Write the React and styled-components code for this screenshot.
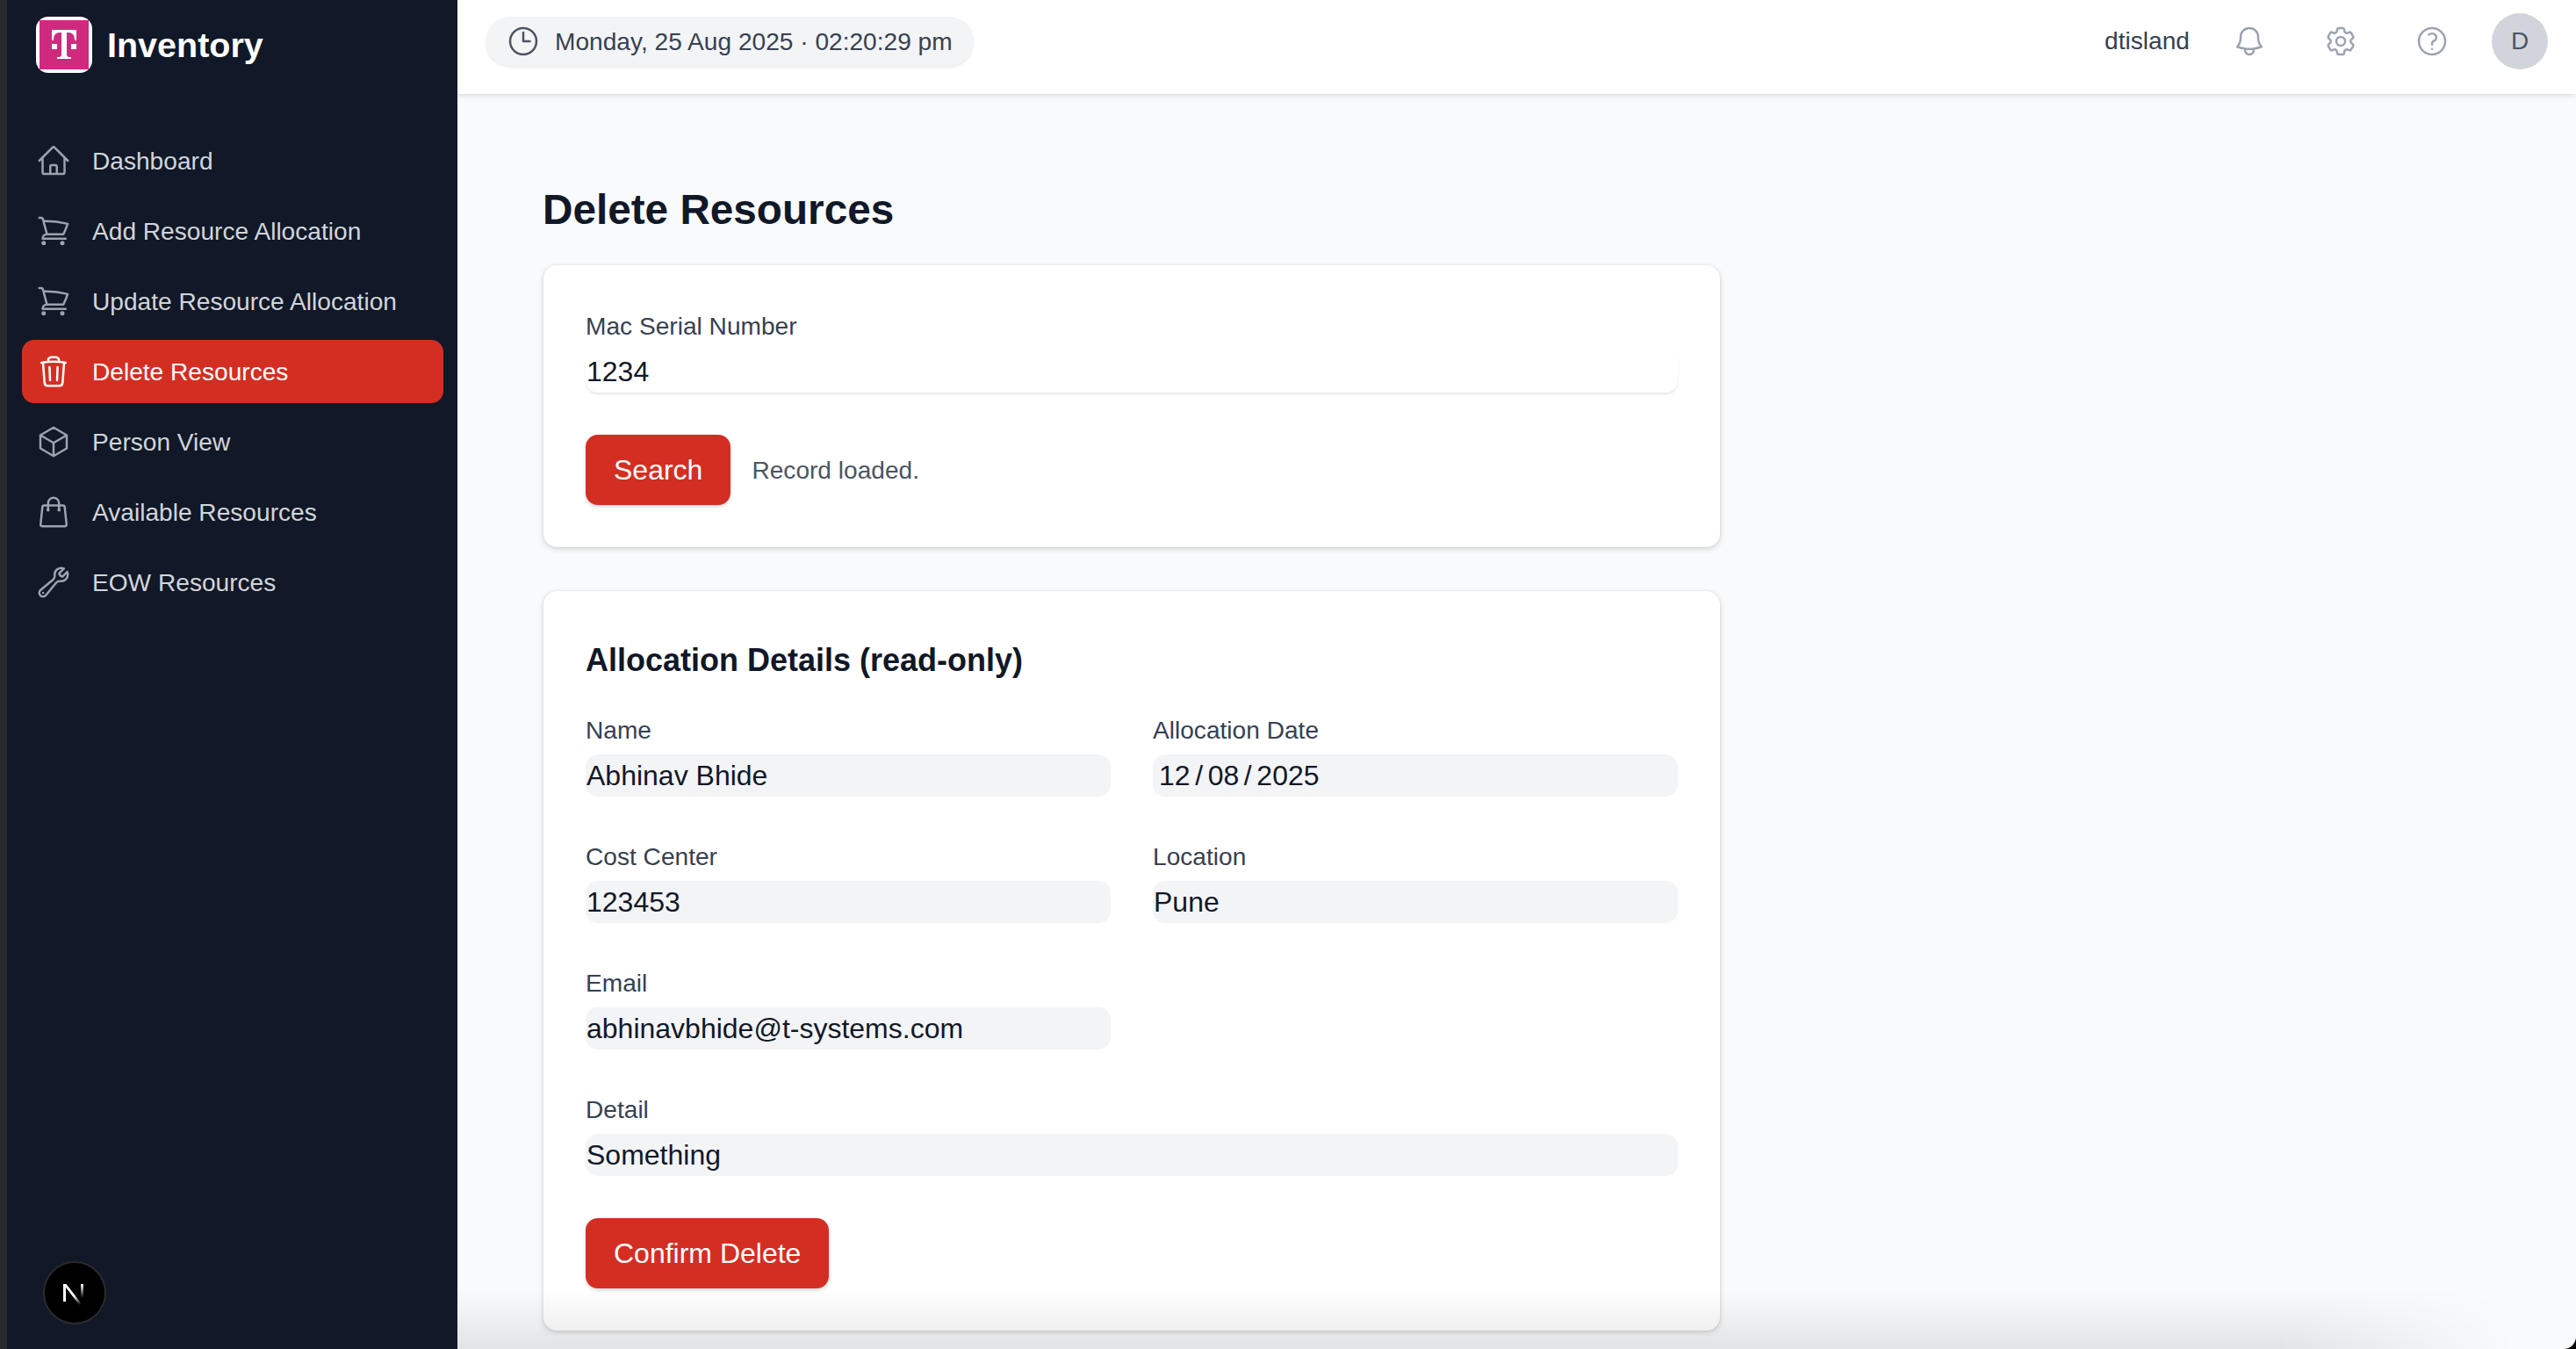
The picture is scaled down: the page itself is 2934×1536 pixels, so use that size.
import React from "react";
import styled, { createGlobalStyle } from "styled-components";
import {
  HiOutlineHome,
  HiOutlineShoppingCart,
  HiOutlineTrash,
  HiOutlineCube,
  HiOutlineShoppingBag,
  HiOutlineWrench,
  HiOutlineClock,
  HiOutlineBell,
  HiOutlineCog6Tooth,
  HiOutlineQuestionMarkCircle,
} from "react-icons/hi2";

const GlobalStyle = createGlobalStyle`
  html, body {
    margin: 0;
    padding: 0;
    height: 100%;
    overflow: hidden;
    background: #000;
    font-family: "Liberation Sans", Arial, sans-serif;
  }
  * { box-sizing: border-box; }
`;

const Shell = styled.div`
  display: flex;
  height: 1536px;
  border-left: 8px solid #2a2a2e;
`;

const Sidebar = styled.aside`
  position: relative;
  flex: 0 0 513px;
  background: #111827;
  padding: 19px 16px 0 17px;
`;

const Brand = styled.div`
  display: flex;
  align-items: center;
  gap: 17px;
  padding-left: 16px;
  height: 64px;
  margin-bottom: 64px;
`;

const LogoBox = styled.div`
  width: 64px;
  height: 64px;
  border-radius: 14px;
  background: #fff;
  padding: 4px;
`;

const LogoInner = styled.div`
  width: 56px;
  height: 56px;
  background: #d02a7f;
  display: flex;
  align-items: center;
  justify-content: center;
`;

const BrandName = styled.span`
  color: #fff;
  font-size: 39.5px;
  font-weight: 700;
`;

const Nav = styled.nav`
  display: flex;
  flex-direction: column;
  gap: 8px;
`;

const NavItem = styled.a`
  display: flex;
  align-items: center;
  height: 72px;
  gap: 24px;
  padding-left: 16px;
  border-radius: 14px;
  font-size: 28.125px;
  background: ${(p) => (p.$active ? "#d42e23" : "transparent")};
  color: ${(p) => (p.$active ? "#fff" : "#d1d5db")};

  svg {
    flex: none;
    width: 40px;
    height: 40px;
    color: ${(p) => (p.$active ? "#fff" : "#9ca3af")};
  }
`;

const NavLabel = styled.span`
  padding-top: 2px;
`;

const NextBadge = styled.div`
  position: absolute;
  left: 41px;
  top: 1436px;
  width: 72px;
  height: 72px;
  border-radius: 50%;
  background: #000;
  border: 2px solid #2b2b2b;
  display: flex;
  align-items: center;
  justify-content: center;
`;

const Main = styled.div`
  position: relative;
  flex: 1;
  min-width: 0;
  background: #f9fafb;
  overflow: hidden;
  border-bottom-right-radius: 14px;
`;

const Header = styled.header`
  display: flex;
  align-items: center;
  justify-content: space-between;
  height: 107px;
  padding: 15px 32px 28px 32px;
  background: #fff;
  box-shadow: 0 2px 5px rgba(0, 0, 0, 0.12);
`;

const Clock = styled.div`
  display: flex;
  align-items: center;
  gap: 16px;
  height: 56px;
  padding: 0 24px 0 23px;
  border-radius: 28px;
  background: #f3f4f6;
  box-shadow: 0 2px 3px rgba(0, 0, 0, 0.08);
  color: #374151;
  font-size: 28.125px;

  svg {
    width: 40px;
    height: 40px;
    color: #4b5563;
  }
`;

const ClockText = styled.span`
  padding-top: 2px;
`;

const HeaderRight = styled.div`
  display: flex;
  align-items: center;
`;

const UserName = styled.span`
  color: #374151;
  font-size: 28.125px;
  margin-right: 48px;
`;

const IconButton = styled.span`
  display: flex;
  width: 40px;
  height: 40px;
  margin-right: 64px;
  color: #9ca3af;

  svg {
    width: 40px;
    height: 40px;
  }
`;

const Avatar = styled.div`
  width: 64px;
  height: 64px;
  margin-left: -16px;
  border-radius: 50%;
  background: #d1d5db;
  color: #4b5563;
  font-size: 28px;
  display: flex;
  align-items: center;
  justify-content: center;
`;

const Content = styled.main`
  width: 1438px;
  padding: 96px 0 0 98px;
`;

const Title = styled.h1`
  margin: 0 0 35px -1px;
  color: #111827;
  font-size: 47.7px;
  line-height: 56px;
  font-weight: 700;
  padding-top: 8px;
`;

const Card = styled.section`
  background: #fff;
  border-radius: 15px;
  padding: 48px;
  margin-bottom: 50px;
  box-shadow: 0 2px 6px rgba(0, 0, 0, 0.16), 0 0 2px rgba(0, 0, 0, 0.1);
`;

const Heading = styled.h2`
  margin: 0 0 34px;
  color: #111827;
  font-size: 36px;
  line-height: 48px;
  font-weight: 700;
  padding-top: 7px;
`;

const Grid = styled.div`
  display: grid;
  grid-template-columns: 1fr 1fr;
  column-gap: 48px;
  row-gap: 47px;
`;

const Field = styled.div`
  grid-column: ${(p) => (p.$wide ? "1 / -1" : "auto")};
`;

const Label = styled.div`
  color: #374151;
  font-size: 28.125px;
  line-height: 44px;
  margin-bottom: 5px;
`;

const Value = styled.div`
  height: 48px;
  line-height: 48px;
  border-radius: 14px;
  font-size: 32px;
  color: #111827;
  padding-left: ${(p) => (p.$date ? "7px" : "1px")};
  word-spacing: ${(p) => (p.$date ? "-3.3px" : "normal")};
  background: ${(p) => (p.$readOnly ? "#f3f4f6" : "#fff")};
  box-shadow: ${(p) => (p.$readOnly ? "none" : "0 2px 3px rgba(0, 0, 0, 0.1)")};
`;

const ActionRow = styled.div`
  display: flex;
  align-items: center;
  gap: 24px;
  margin-top: 48px;
`;

const Button = styled.button`
  height: 80px;
  padding: 0 32px;
  border: none;
  border-radius: 14px;
  background: #d42e23;
  color: #fff;
  font-family: inherit;
  font-size: 32px;
  box-shadow: 0 2px 4px rgba(0, 0, 0, 0.16);
`;

const Status = styled.span`
  color: #4b5563;
  font-size: 28.125px;
  padding-top: 2px;
`;

const BottomFade = styled.div`
  position: absolute;
  left: 0;
  right: 0;
  bottom: 0;
  height: 68px;
  pointer-events: none;
  background: linear-gradient(to bottom, rgba(0, 0, 0, 0), rgba(0, 0, 0, 0.09));
  mask-image: linear-gradient(to right, #000 86%, transparent 97%);
`;

const navItems = [
  { label: "Dashboard", icon: HiOutlineHome },
  { label: "Add Resource Allocation", icon: HiOutlineShoppingCart },
  { label: "Update Resource Allocation", icon: HiOutlineShoppingCart },
  { label: "Delete Resources", icon: HiOutlineTrash, active: true },
  { label: "Person View", icon: HiOutlineCube },
  { label: "Available Resources", icon: HiOutlineShoppingBag },
  { label: "EOW Resources", icon: HiOutlineWrench },
];

const TLogo = () => (
  <svg width="32" height="36" viewBox="0 0 32 36" fill="#fff">
    <path d="M2 1h28v12h-2c0-6-2-9-8-9h-1v25c0 2 1 3 3 3h2v2H8v-2h2c2 0 3-1 3-3V4h-1C6 4 4 7 4 13H2z" />
    <rect x="2" y="17" width="6" height="6" />
    <rect x="24" y="17" width="6" height="6" />
  </svg>
);

const NextMark = () => (
  <svg width="34" height="34" viewBox="0 0 34 34">
    <defs>
      <linearGradient id="nextFade" x1="0" y1="0" x2="0.7" y2="1">
        <stop offset="0.6" stopColor="#fff" />
        <stop offset="1" stopColor="#fff" stopOpacity="0" />
      </linearGradient>
      <linearGradient id="nextBar" x1="0" y1="0" x2="0" y2="1">
        <stop offset="0" stopColor="#fff" />
        <stop offset="1" stopColor="#fff" stopOpacity="0" />
      </linearGradient>
    </defs>
    <path d="M4 7h3v20H4z" fill="#fff" />
    <path d="M4 7h3.5l20 26H24z" fill="url(#nextFade)" />
    <rect x="24" y="7" width="3" height="16" fill="url(#nextBar)" />
  </svg>
);

const App = () => {
  return (
    <>
      <GlobalStyle />
      <Shell>
        <Sidebar>
          <Brand>
            <LogoBox>
              <LogoInner>
                <TLogo />
              </LogoInner>
            </LogoBox>
            <BrandName>Inventory</BrandName>
          </Brand>
          <Nav>
            {navItems.map((item) => (
              <NavItem key={item.label} $active={item.active}>
                <item.icon />
                <NavLabel>{item.label}</NavLabel>
              </NavItem>
            ))}
          </Nav>
          <NextBadge>
            <NextMark />
          </NextBadge>
        </Sidebar>
        <Main>
          <Header>
            <Clock>
              <HiOutlineClock />
              <ClockText>Monday, 25 Aug 2025 · 02:20:29 pm</ClockText>
            </Clock>
            <HeaderRight>
              <UserName>dtisland</UserName>
              <IconButton>
                <HiOutlineBell />
              </IconButton>
              <IconButton>
                <HiOutlineCog6Tooth />
              </IconButton>
              <IconButton>
                <HiOutlineQuestionMarkCircle />
              </IconButton>
              <Avatar>D</Avatar>
            </HeaderRight>
          </Header>
          <Content>
            <Title>Delete Resources</Title>
            <Card>
              <Label>Mac Serial Number</Label>
              <Value>1234</Value>
              <ActionRow>
                <Button>Search</Button>
                <Status>Record loaded.</Status>
              </ActionRow>
            </Card>
            <Card>
              <Heading>Allocation Details (read-only)</Heading>
              <Grid>
                <Field>
                  <Label>Name</Label>
                  <Value $readOnly>Abhinav Bhide</Value>
                </Field>
                <Field>
                  <Label>Allocation Date</Label>
                  <Value $readOnly $date>12 / 08 / 2025</Value>
                </Field>
                <Field>
                  <Label>Cost Center</Label>
                  <Value $readOnly>123453</Value>
                </Field>
                <Field>
                  <Label>Location</Label>
                  <Value $readOnly>Pune</Value>
                </Field>
                <Field>
                  <Label>Email</Label>
                  <Value $readOnly>abhinavbhide@t-systems.com</Value>
                </Field>
                <Field />
                <Field $wide>
                  <Label>Detail</Label>
                  <Value $readOnly>Something</Value>
                </Field>
              </Grid>
              <ActionRow>
                <Button>Confirm Delete</Button>
              </ActionRow>
            </Card>
          </Content>
          <BottomFade />
        </Main>
      </Shell>
    </>
  );
};

export default App;
